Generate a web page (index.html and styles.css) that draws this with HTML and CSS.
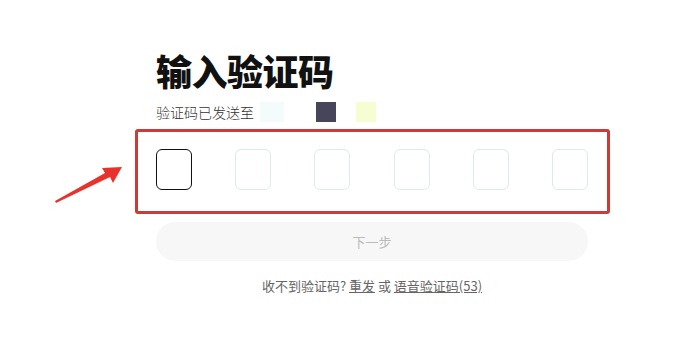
FILE: index.html
```html
<!DOCTYPE html>
<html lang="zh">
<head>
    <meta charset="UTF-8">
    <meta name="viewport" content="width=device-width, initial-scale=1.0">
    <title>输入验证码</title>
    <link rel="stylesheet" href="styles.css">
</head>
<body>

    <div class="page">
        <h1>输入验证码</h1>
        <div class="sent">
            <span>验证码已发送至</span>
            <span class="mask mask-cyan"></span>
            <span class="mask mask-dark"></span>
            <span class="mask mask-yellow"></span>
        </div>

        <div class="code-row">
            <div class="code-box active"></div>
            <div class="code-box"></div>
            <div class="code-box"></div>
            <div class="code-box"></div>
            <div class="code-box"></div>
            <div class="code-box"></div>
        </div>

        <button class="next" disabled>下一步</button>

        <p class="resend">收不到验证码? <a href="#">重发</a> 或 <a href="#">语音验证码(53)</a></p>
    </div>

    <!-- 标注 -->
    <div class="mark-box"></div>
    <svg class="mark-arrow" width="80" height="50" viewBox="0 0 80 50">
        <path d="M3 43 L53 15 L50 10 L70 9 L61 25 L58 19 L4 45 Z" fill="#e8332c"/>
    </svg>

</body>
</html>
```

FILE: styles.css
```css
body { margin: 0; background: #fff; font-family: "Noto Sans CJK SC", "Noto Sans", sans-serif; color: #222; }

.page { width: 432px; padding: 48px 0 0 156px; }

h1 { margin: 0; font-size: 36px; line-height: 44px; font-weight: 900; color: #111; letter-spacing: -0.5px; }

.sent { display: flex; align-items: center; height: 22px; margin-top: 9px; font-size: 14px; font-weight: 300; color: #333; }
.mask { display: inline-block; width: 20px; height: 20px; }
.mask-cyan { width: 24px; margin-left: 6px; background: #f3fbfb; }
.mask-dark { margin-left: 32px; background: #474559; }
.mask-yellow { margin-left: 20px; background: #f6fdd2; }

.code-row { display: flex; justify-content: space-between; margin-top: 26px; }
.code-box { width: 34px; height: 39px; border: 1px solid #dfebe5; border-radius: 6px; }
.code-box.active { border-color: #111; }

.next { display: block; width: 432px; height: 39px; margin-top: 32px; border: none; border-radius: 20px; background: #f7f7f7; color: #bbb; font-family: inherit; font-size: 13px; }

.resend { margin: 15px 0 0; text-align: center; font-size: 13px; color: #666; }
.resend a { color: #666; }

.mark-box { position: absolute; left: 135px; top: 129px; width: 469px; height: 79px; border: 3px solid #d03a36; border-radius: 3px; }
.mark-arrow { position: absolute; left: 52px; top: 158px; }
```
